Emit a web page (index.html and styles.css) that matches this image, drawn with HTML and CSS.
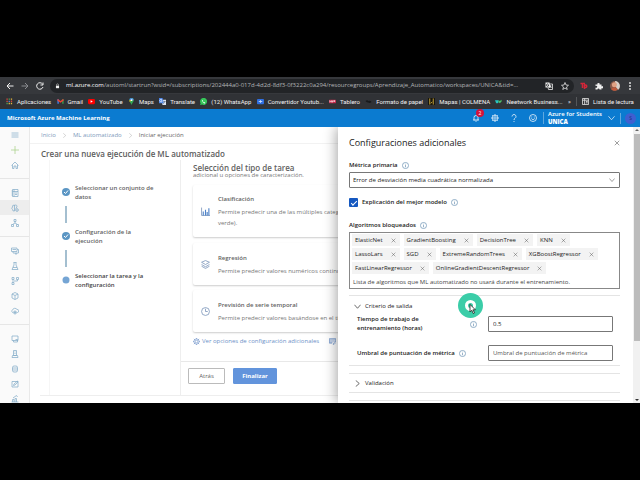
FILE: index.html
```
<!DOCTYPE html>
<html lang="es">
<head>
<meta charset="utf-8">
<title>Microsoft Azure Machine Learning</title>
<link rel="stylesheet" href="styles.css">
</head>
<body>
<svg class="defs" aria-hidden="true">
  <symbol id="info" viewBox="0 0 16 16"><circle cx="8" cy="8" r="7"/><path d="M8 7v5M8 4v1.5"/></symbol>
  <symbol id="x" viewBox="0 0 16 16"><path d="M2 2l12 12M14 2L2 14"/></symbol>
  <symbol id="down" viewBox="0 0 16 16"><path d="M1 4l7 8 7-8"/></symbol>
  <symbol id="right" viewBox="0 0 16 16"><path d="M4 1l8 7-8 7"/></symbol>
</svg>

<header class="browser">
  <div class="address-row">
    <button class="nav back" aria-label="Atrás"><svg viewBox="0 0 16 16"><path d="M15 8H2M8 2L2 8l6 6"/></svg></button>
    <button class="nav dim" aria-label="Adelante"><svg viewBox="0 0 16 16"><path d="M1 8h13M8 2l6 6-6 6"/></svg></button>
    <button class="nav reload" aria-label="Recargar"><svg viewBox="0 0 16 16"><path d="M13 4a6.500 6.500 0 1 0 1 6M14 1v5H9"/></svg></button>
    <div class="omnibox">
      <svg class="lock" viewBox="0 0 16 16"><path class="solid" d="M3 7h10v8H3z"/><path d="M5 7V4a3 3 0 0 1 6 0v3"/></svg>
      <span class="url"><b>ml.azure.com</b>/automl/startrun?wsid=/subscriptions/202444a0-017d-4d2d-8df3-0f3222c0a294/resourcegroups/Aprendizaje_Automatico/workspaces/UNICA&amp;tid=...</span>
      <svg class="tool" viewBox="0 0 16 16"><path class="solid" d="M1 1h8l2 10H1z"/><path d="M10 4h5v11H7l-1-4M9 8h4M11 7v2l-2 3M11 9l2 3"/><path class="dark" d="M7 4.500A2.500 2.500 0 1 0 7 8V6H5"/></svg>
      <svg class="tool" viewBox="0 0 16 16"><path d="M8 1l2 5 5 .5-4 3.500 1.500 5L8 12l-4.500 3L5 10 1 6.500 6 6z"/></svg>
    </div>
    <svg class="ext red" viewBox="0 0 16 16"><path d="M1 3h9M5 3v9M8 6h3a2 2 0 0 1 0 5H9M9 6v8"/></svg>
    <svg class="ext" viewBox="0 0 16 16"><path class="solid" d="M1 5h4a2.200 2.200 0 1 1 4 0h4v4a2.200 2.200 0 1 1 0 3v3H9a2 2 0 1 0-4 0H1v-4a2 2 0 1 0 0-3z"/></svg>
    <svg class="avatar" viewBox="0 0 16 16"><circle cx="8" cy="8" r="8" fill="#8b5a4a"/><path d="M8 0a8 8 0 0 1 5 14L9 9z" fill="#d8d2cc"/><circle cx="7" cy="6" r="4" fill="#e0a184"/><path d="M2 13q5-6 10 0-5 5-10 0z" fill="#c05a3c"/></svg>
    <svg class="kebab" viewBox="0 0 16 16"><g fill="#ddd"><circle cx="8" cy="2" r="2"/><circle cx="8" cy="8" r="2"/><circle cx="8" cy="14" r="2"/></g></svg>
  </div>
  <nav class="bookmarks" aria-label="Marcadores">
    <a href="#"><svg viewBox="0 0 16 16"><g fill="#e34b3d"><path d="M1 1h3v3H1zM1 6h3v3H1z"/></g><g fill="#49a35a"><path d="M6 1h3v3H6zM1 11h3v3H1z"/></g><g fill="#e8b93b"><path d="M11 1h3v3h-3zM6 11h3v3H6zM11 11h3v3h-3z"/></g><path d="M6 6h3v3H6z" fill="#4b83e8"/><path d="M11 6h3v3h-3z" fill="#e34b3d"/></svg>Aplicaciones</a>
    <a href="#"><svg viewBox="0 0 16 16"><path d="M1 3h3v10H1z" fill="#4285f4"/><path d="M12 3h3v10h-3z" fill="#34a853"/><path d="M1 3h2l5 4 5-4h2v3l-7 5-7-5z" fill="#ea4335"/></svg>Gmail</a>
    <a href="#"><svg viewBox="0 0 16 16"><rect y="2" width="16" height="12" rx="3" fill="#f00"/><path d="M6 5l5 3-5 3z" fill="#fff"/></svg>YouTube</a>
    <a href="#"><svg viewBox="0 0 16 16"><path d="M8 16C7 11 3 9 3 5a5 5 0 0 1 10 0c0 4-4 6-5 11z" fill="#34a853"/><path d="M3 5a5 5 0 0 1 5-5v5z" fill="#4285f4"/><path d="M3 5h5l-4 4z" fill="#fbbc04"/><path d="M8 0a5 5 0 0 1 5 5H8z" fill="#5a9bf5"/><circle cx="8" cy="5" r="2" fill="#fff"/></svg>Maps</a>
    <a href="#"><svg viewBox="0 0 16 16"><path d="M6 4h10v12H8z" fill="#dce3ee"/><path d="M0 0h8l3 12H0z" fill="#4a84e8"/><path d="M7 4a3 3 0 1 0 0 4V6H5" fill="none" stroke="#fff"/><path d="M10 8h5M13 7v2l-3 4" fill="none" stroke="#607080"/></svg>Translate</a>
    <a href="#"><svg viewBox="0 0 16 16"><path d="M0 16l1.500-4A8 8 0 1 1 5 15z" fill="#35c759"/><path d="M5 4q-2 2 2 6t5 1l-2-2-1 1-3-3 1-1z" fill="#fff"/></svg>(12) WhatsApp</a>
    <a href="#"><svg viewBox="0 0 16 16"><rect y="2" width="16" height="12" rx="2" fill="#2f6fe0"/><path d="M4 8h8M8 5v6" stroke="#cfe0ff" stroke-width="2"/></svg>Convertidor Youtub...</a>
    <a href="#"><svg viewBox="0 0 16 16"><rect y="4" width="16" height="8" rx="1" fill="#c5284a"/><path d="M2 10V6l2 2 2-2v4M8 6v4M10 6h4M10 8h4" stroke="#fff" fill="none"/></svg>Tablero</a>
    <a href="#"><svg viewBox="0 0 16 16"><path d="M1 7q4-4 7 0 4-2 7 2-5 4-7 1-4 1-7-3z" fill="#18191b"/></svg>Formato de papel</a>
    <a href="#"><svg viewBox="0 0 16 16"><path d="M0 0h16v16H0z" fill="#17150d"/><path d="M4 1v14M12 1v14M6 12l4-3" stroke="#d8b13c" stroke-width="2"/></svg>Mapas | COLMENA</a>
    <a href="#"><svg viewBox="0 0 16 16"><path d="M0 5h8v3a3 3 0 0 1-6 2z" fill="#27c4c0"/><path d="M8 5l3 2 4-3v4l-4 4-3-3z" fill="#4fc36b"/></svg>Neetwork Business...</a>
    <span>»</span>
    <a href="#" class="reading"><svg viewBox="0 0 16 16"><path d="M1 1h14v14H1zM1 5h14M6 1v14M9 8h4M9 11h4" fill="none" stroke="#ddd" stroke-width="2"/></svg>Lista de lectura</a>
  </nav>
</header>

<header class="azure">
  <strong class="brand">Microsoft Azure Machine Learning</strong>
  <button class="bell" aria-label="Notificaciones"><svg viewBox="0 0 16 16"><path d="M2 12h12M4 12V7a4 4 0 0 1 8 0v5M6 13q2 4 4 0"/></svg><span class="badge">2</span></button>
  <button aria-label="Configuración"><svg viewBox="0 0 16 16"><circle cx="8" cy="8" r="5.500"/><circle cx="8" cy="8" r="2.500"/><path d="M8 0v2M8 14v2M0 8h2M14 8h2M2.500 2.500L4 4M12 12l1.500 1.500M2.500 13.500L4 12M12 4l1.500-1.500"/></svg></button>
  <button aria-label="Ayuda"><svg viewBox="0 0 16 16"><path d="M4 5a4 4 0 1 1 6 3.500Q8 9.500 8 12M8 14v2"/></svg></button>
  <button aria-label="Comentarios"><svg viewBox="0 0 16 16"><circle cx="8" cy="8" r="7"/><path d="M4.500 9q3.500 5 7 0M5.500 5v2M10.500 5v2"/></svg></button>
  <button class="account"><span>Azure for Students<br><b>UNICA</b></span><svg viewBox="0 0 16 16"><use href="#down"/></svg></button>
  <button class="user" aria-label="Cuenta"><span>S</span></button>
</header>

<div class="stage">
  <nav class="rail" aria-label="Navegación">
    <a href="#" aria-label="Menú"><svg viewBox="0 0 16 16"><path d="M1 4h14M1 8h14M1 12h14"/></svg></a>
    <a href="#" class="new" aria-label="Nuevo"><svg viewBox="0 0 16 16"><path d="M8 0v16M0 8h16"/></svg></a>
    <a href="#" aria-label="Inicio"><svg viewBox="0 0 16 16"><path d="M1 9l7-7 7 7M3 8v7h3v-5h4v5h3V8"/></svg></a>
    <hr>
    <a href="#" aria-label="Notebooks"><svg viewBox="0 0 16 16"><path d="M3 1h11v14H3zM3 5h11M6 1v14M8 8h4M8 11h4M1 4h2M1 8h2M1 12h2"/></svg></a>
    <a href="#" class="current" aria-label="ML automatizado"><svg viewBox="0 0 16 16"><path d="M7 14V2Q2 2 3 6q-3 3 0 5 0 4 4 3M7 3q5-3 5 3l-3 3"/><circle cx="12" cy="12" r="2.500"/><path d="M12 8v1M12 15v1M8 12h1M15 12h1"/></svg></a>
    <a href="#" aria-label="Diseñador"><svg viewBox="0 0 16 16"><path d="M6 1h4v4H6zM1 11h4v4H1zM11 11h4v4h-4zM8 5v3M3 11l5-3 5 3"/></svg></a>
    <hr>
    <a href="#" aria-label="Conjuntos de datos"><svg viewBox="0 0 16 16"><path d="M1 2h11v7H1zM4 9v3h11V5h-3M3 5h7M8 12l2 3 2-3"/></svg></a>
    <a href="#" aria-label="Experimentos"><svg viewBox="0 0 16 16"><path d="M5 1h6M6 1v5L2 15h12L10 6V1M4 11h8"/></svg></a>
    <a href="#" aria-label="Canalizaciones"><svg viewBox="0 0 16 16"><path d="M2 1h4v4H2zM11 1h4v4h-4zM2 11h4v4H2zM4 5v6M6 8h7V5"/></svg></a>
    <a href="#" aria-label="Modelos"><svg viewBox="0 0 16 16"><path d="M8 1l6 3v8l-6 3-6-3V4zM2 4l6 3 6-3M8 7v8"/></svg></a>
    <a href="#" aria-label="Puntos de conexión"><svg viewBox="0 0 16 16"><path d="M4 11H3a3 3 0 0 1 0-5 5 5 0 0 1 9-1 3 3 0 0 1 1 6h-1"/><circle cx="8" cy="11" r="3"/><path d="M8 9v4M6 11h4"/></svg></a>
    <hr>
    <a href="#" aria-label="Proceso"><svg viewBox="0 0 16 16"><path d="M2 2h12v9H2zM5 14h8M5 11v3M9 9h4v5"/></svg></a>
    <a href="#" aria-label="Máquinas"><svg viewBox="0 0 16 16"><path d="M5 1h6v10H5zM7 4h2M7 7h2M3 11h10l1 4H2z"/></svg></a>
    <a href="#" aria-label="Almacenes de datos"><svg viewBox="0 0 16 16"><rect x="3" y="2" width="10" height="12" rx="3"/><path d="M3 6h10M3 10h10"/></svg></a>
    <a href="#" aria-label="Etiquetado"><svg viewBox="0 0 16 16"><path d="M2 3h12v11H2zM5 11l1-3 7-6 1 2-6 6z"/></svg></a>
    <a href="#" aria-label="Servicios"><svg viewBox="0 0 16 16"><path d="M1 14h14M3 14V9h3v5M8 14V7h3v7M4 6l7-5 2 3"/></svg></a>
  </nav>

  <main class="page">
    <nav class="crumbs" aria-label="Ruta">
      <a href="#">Inicio</a><svg viewBox="0 0 16 16"><use href="#right"/></svg>
      <a href="#">ML automatizado</a><svg viewBox="0 0 16 16"><use href="#right"/></svg>
      <span>Iniciar ejecución</span>
    </nav>
    <h1>Crear una nueva ejecución de ML automatizado</h1>
    <div class="wizard">
      <ol class="steps">
        <li><svg class="dot" viewBox="0 0 16 16"><circle cx="8" cy="8" r="8"/><path d="M4 8l3 3 5-6"/></svg><span>Seleccionar un conjunto de datos</span></li>
        <li><svg class="dot" viewBox="0 0 16 16"><circle cx="8" cy="8" r="8"/><path d="M4 8l3 3 5-6"/></svg><span>Configuración de la ejecución</span></li>
        <li class="active"><svg class="dot" viewBox="0 0 16 16"><circle cx="8" cy="8" r="7"/></svg><span>Seleccionar la tarea y la configuración</span></li>
      </ol>
      <section class="task">
        <div class="task-body">
          <h2>Selección del tipo de tarea</h2>
          <p class="hint">adicional u opciones de caracterización.</p>
          <article class="card tall">
            <svg viewBox="0 0 16 16"><path d="M1 1v14h15"/><path class="bars" d="M4 15V8M8 15V5M11 15V9M14 15V2"/></svg>
            <div><h3>Clasificación</h3><p>Permite predecir una de las múltiples categorías,<br>verde).</p></div>
          </article>
          <article class="card">
            <svg viewBox="0 0 16 16"><path d="M8 1l7 3-7 4-7-4zM1 8l7 4 7-4M1 11l7 4 7-4"/></svg>
            <div><h3>Regresión</h3><p>Permite predecir valores numéricos continuos.</p></div>
          </article>
          <article class="card">
            <svg viewBox="0 0 16 16"><circle cx="8" cy="8" r="7"/><path d="M8 3v5h4"/></svg>
            <div><h3>Previsión de serie temporal</h3><p>Permite predecir valores basándose en el tiempo.</p></div>
          </article>
          <div class="links">
            <a href="#"><svg viewBox="0 0 16 16"><circle cx="8" cy="8" r="6"/><circle cx="8" cy="8" r="3"/><path d="M8 0v2M8 14v2M0 8h2M14 8h2M2 2l2 2M12 12l2 2M2 14l2-2M12 4l2-2"/></svg>Ver opciones de configuración adicionales</a>
            <a href="#" aria-label="Ver configuración de caracterización"><svg viewBox="0 0 16 16"><path d="M1 1h14v8M1 1v11h6M1 4h14M1 7h12M1 10h7M9 14l5-6 2 2-5 5z"/></svg></a>
          </div>
        </div>
        <div class="actions"><button>Atrás</button><button class="primary">Finalizar</button></div>
      </section>
    </div>
    <div class="foot"></div>
  </main>

  <aside class="drawer">
    <form class="panel">
      <div class="panel-head"><h2>Configuraciones adicionales</h2><button type="button" aria-label="Cerrar"><svg viewBox="0 0 16 16"><use href="#x"/></svg></button></div>
      <div class="label"><label for="metric">Métrica primaria</label><svg class="info" viewBox="0 0 16 16"><use href="#info"/></svg></div>
      <div class="select"><select id="metric"><option>Error de desviación media cuadrática normalizada</option></select><svg viewBox="0 0 16 16"><use href="#down"/></svg></div>
      <div class="check"><input type="checkbox" id="explain" checked><label for="explain">Explicación del mejor modelo</label><svg class="info" viewBox="0 0 16 16"><use href="#info"/></svg></div>
      <div class="label"><span>Algoritmos bloqueados</span><svg class="info" viewBox="0 0 16 16"><use href="#info"/></svg></div>
      <div class="tags">
        <ul>
          <li>ElasticNet<button type="button" aria-label="Quitar ElasticNet"><svg viewBox="0 0 16 16"><use href="#x"/></svg></button></li>
          <li>GradientBoosting<button type="button" aria-label="Quitar GradientBoosting"><svg viewBox="0 0 16 16"><use href="#x"/></svg></button></li>
          <li>DecisionTree<button type="button" aria-label="Quitar DecisionTree"><svg viewBox="0 0 16 16"><use href="#x"/></svg></button></li>
          <li>KNN<button type="button" aria-label="Quitar KNN"><svg viewBox="0 0 16 16"><use href="#x"/></svg></button></li>
        </ul>
        <ul>
          <li>LassoLars<button type="button" aria-label="Quitar LassoLars"><svg viewBox="0 0 16 16"><use href="#x"/></svg></button></li>
          <li>SGD<button type="button" aria-label="Quitar SGD"><svg viewBox="0 0 16 16"><use href="#x"/></svg></button></li>
          <li>ExtremeRandomTrees<button type="button" aria-label="Quitar ExtremeRandomTrees"><svg viewBox="0 0 16 16"><use href="#x"/></svg></button></li>
          <li>XGBoostRegressor<button type="button" aria-label="Quitar XGBoostRegressor"><svg viewBox="0 0 16 16"><use href="#x"/></svg></button></li>
        </ul>
        <ul>
          <li>FastLinearRegressor<button type="button" aria-label="Quitar FastLinearRegressor"><svg viewBox="0 0 16 16"><use href="#x"/></svg></button></li>
          <li>OnlineGradientDescentRegressor<button type="button" aria-label="Quitar OnlineGradientDescentRegressor"><svg viewBox="0 0 16 16"><use href="#x"/></svg></button></li>
        </ul>
        <p>Lista de algoritmos que ML automatizado no usará durante el entrenamiento.</p>
      </div>
      <section class="group">
        <button type="button" class="toggle" aria-expanded="true"><svg viewBox="0 0 16 16"><use href="#down"/></svg>Criterio de salida</button>
        <div class="field"><label for="hours">Tiempo de trabajo de entrenamiento (horas)</label><svg class="info" viewBox="0 0 16 16"><use href="#info"/></svg><input id="hours" type="text" value="0.5"></div>
        <div class="field second"><label for="score">Umbral de puntuación de métrica</label><svg class="info" viewBox="0 0 16 16"><use href="#info"/></svg><input id="score" type="text" placeholder="Umbral de puntuación de métrica"></div>
      </section>
      <section class="group closed"><button type="button" class="toggle" aria-expanded="false"><svg viewBox="0 0 16 16"><use href="#right"/></svg>Validación</button></section>
      <section class="group"></section>
    </form>
    <div class="scroll" aria-hidden="true"><i class="up"></i><div class="thumb"></div><i class="dn"></i></div>
    <div class="pointer" aria-hidden="true"><svg viewBox="0 0 16 24"><path d="M2 1v18l4-4 4 8 3-2-4-7h6z"/></svg></div>
  </aside>
</div>
</body>
</html>
```

FILE: styles.css
```
* { box-sizing: border-box; }
body {
  margin: 0;
  padding: 77px 0;
  height: 100vh;
  display: flex;
  flex-direction: column;
  background: #000;
  color: #222;
  font: 6px/9px "Open Sans", "Noto Sans", sans-serif;
}
h1, h2, h3, p, ul, ol { margin: 0; padding: 0; font-weight: 400; }
ul, ol { list-style: none; }
a { color: inherit; text-decoration: none; }
button { margin: 0; padding: 0; border: 0; background: none; font: inherit; color: inherit; display: flex; align-items: center; }
svg { width: 8px; height: 8px; flex: none; fill: none; stroke: currentColor; stroke-width: 1.500; }
.defs { position: absolute; width: 0; height: 0; }

/* Browser chrome */
.browser { flex: none; background: #303236; color: #f0f0f0; }
.address-row { height: 17px; display: flex; align-items: center; padding-right: 6px; background: #36383c; }
.nav { width: 10px; justify-content: center; }
.nav svg { stroke-width: 2; }
.nav.back { width: 20px; }
.nav.reload { width: 20px; }
.dim { color: #8a8c90; }
.omnibox { flex: 1; min-width: 0; height: 14px; margin-right: 6px; padding: 0 5px; display: flex; align-items: center; gap: 8px; border-radius: 7px; background: #222427; }
.lock { width: 5px; height: 6px; margin-right: -2px; }
.solid { fill: currentColor; stroke: none; }
.dark { stroke: #222427; }
.url { flex: 1; white-space: nowrap; color: #b4b6b9; }
.url b { font-weight: 400; color: #fff; }
.ext { margin-right: 7px; }
.red { color: #d32638; stroke-width: 3; }
.avatar { width: 10px; height: 10px; stroke: none; margin-right: 6px; }
.kebab { stroke: none; }
.bookmarks { height: 15px; padding: 0 6px; display: flex; align-items: center; justify-content: space-between; font-family: Roboto, "Open Sans", sans-serif; white-space: nowrap; }
.bookmarks a { display: flex; align-items: center; gap: 4px; }
.bookmarks svg { width: 7px; height: 7px; stroke: none; }
.bookmarks .reading { padding-left: 5px; border-left: 1px solid #55575a; }

/* Product bar */
.azure { flex: none; height: 18px; padding: 0 4px 0 7px; display: flex; align-items: center; gap: 11px; background: #0b7bd0; color: #fff; }
.brand { margin-right: auto; font-weight: 700; }
.bell { position: relative; }
.badge { position: absolute; left: 4px; top: -5px; width: 8px; height: 8px; border-radius: 50%; background: #d3133b; font-size: 5px; line-height: 8px; text-align: center; }
.account { height: 12px; padding-left: 4px; margin-left: -5px; border-left: 1px solid #5fa8df; gap: 6px; text-align: left; line-height: 8px; font-weight: 600; white-space: nowrap; }
.account svg { width: 7px; }
.user { margin-left: -6px; padding-left: 4px; border-left: 1px solid #5fa8df; }
.user span { width: 11px; border-radius: 50%; background: #3f5fd0; line-height: 11px; text-align: center; font-size: 5px; color: #1e2c80; }

/* Working area */
.stage { flex: 1; min-height: 0; position: relative; display: flex; overflow: hidden; background: #fff; }
.rail { width: 30px; flex: none; border-right: 1px solid #e9e9e9; background: #fafafa; color: #86aeca; }
.rail a { height: 15px; display: flex; align-items: center; justify-content: center; }
.rail .current { background: #ededed; }
.rail .new { color: #a9d08a; }
.rail hr { height: 1px; margin: 6px 0; border: 0; background: #e6e6e6; }
.page { flex: 1; min-width: 0; display: flex; flex-direction: column; color: #626262; }
.crumbs { height: 17px; flex: none; padding-left: 11px; display: flex; align-items: center; gap: 6px; border-bottom: 1px solid #f2f2f2; color: #666; }
.crumbs a { color: #7e9abb; }
.crumbs svg { width: 5px; height: 5px; color: #aaa; }
.page h1 { margin: 4px 0 0 11px; flex: none; font-size: 8px; line-height: 12px; font-weight: 600; color: #5c5c5c; }
.wizard { flex: 1; min-height: 0; margin: 0 0 0 19px; display: flex; }
.steps { width: 132px; flex: none; padding: 24px 22px 0 12px; border-left: 1px solid #f6f6f6; border-right: 1px solid #eee; font-weight: 600; }
.steps li { position: relative; height: 44px; display: flex; gap: 5px; }
.steps li:not(:last-child)::after { content: ""; position: absolute; left: 3px; top: 22px; width: 2px; height: 17px; background: #a4bfd0; }
.dot { margin-top: 4px; fill: #5b96c4; stroke: none; }
.dot path { fill: none; stroke: #fff; stroke-width: 2; }
.active { color: #444; }
.active .dot { fill: #75a5d4; }
.task { flex: 1; display: flex; flex-direction: column; }
.task-body { padding: 3px 16px 0 12px; }
.task h2 { font-size: 8px; line-height: 9px; font-weight: 600; }
.hint { line-height: 7px; color: #777; }
.card { height: 42px; margin-bottom: 5px; padding: 0 8px; display: flex; align-items: center; gap: 8px; border-radius: 2px; box-shadow: 0 1px 2px #ccc; background: #fff; }
.card.tall { height: 52px; margin: 6px 0; }
.card svg { width: 9px; height: 9px; color: #8099bd; }
.card .bars { stroke-width: 2; stroke: #4f83c8; }
.card h3 { font-size: 6px; line-height: 12px; margin-bottom: 2px; font-weight: 600; }
.card p { line-height: 11px; white-space: nowrap; color: #777; }
.links { display: flex; gap: 10px; color: #6d91c8; }
.links a { display: flex; align-items: center; gap: 2px; }
.links svg { width: 7px; height: 7px; }
.actions { margin-top: 15px; padding: 6px 7px; display: flex; gap: 8px; border-top: 1px solid #e8e8e8; }
.actions button { min-width: 37px; height: 16px; justify-content: center; border: 1px solid #bbb; border-radius: 1px; }
.actions .primary { min-width: 44px; border-color: #6294dc; background: #6294dc; color: #fff; font-weight: 700; }
.foot { height: 8px; flex: none; margin-left: 10px; border-top: 1px solid #eee; }

/* Settings drawer */
.drawer { position: absolute; inset: 0 0 0 auto; width: 302px; display: flex; background: #fff; box-shadow: -2px 0 12px #0005; }
.panel { flex: 1; min-width: 0; padding: 9px 13px 0 11px; overflow: hidden; }
.panel-head { display: flex; align-items: center; justify-content: space-between; height: 13px; margin-bottom: 11px; }
.panel-head h2 { font-size: 9px; line-height: 13px; }
.panel-head svg { width: 6px; height: 6px; color: #555; }
.label, .check { display: flex; align-items: center; gap: 4px; font-weight: 600; }
.label { height: 10px; margin-bottom: 2px; }
.info { width: 7px; height: 7px; color: #5f88ad; }
.select { display: flex; position: relative; }
.select svg { position: absolute; right: 5px; top: 5px; width: 6px; height: 6px; color: #555; pointer-events: none; }
select { flex: 1; height: 16px; padding: 0 3px; appearance: none; border: 1px solid #777; border-radius: 1px; background: #fff; color: #222; font: inherit; }
.check { height: 10px; margin: 9px 0 13px; }
.check input { width: 9px; height: 9px; margin: 0; appearance: none; border-radius: 1px; background: #1558c0; display: grid; place-items: center; }
.check input::after { content: ""; width: 5px; height: 2px; border: solid #fff; border-width: 0 0 1px 1px; transform: rotate(-45deg); }
.tags { border: 1px solid #888; padding: 1px 2px; height: 57px; }
.tags ul { display: flex; gap: 4px; margin-bottom: 2px; }
.tags li { height: 12px; padding: 0 3px; display: flex; align-items: center; gap: 7px; background: #f3f3f3; }
.tags li svg { width: 5px; height: 5px; color: #555; }
.tags li button { width: 7px; justify-content: center; }
.tags p { padding: 1px; line-height: 11px; color: #444; white-space: nowrap; }
.group { margin-top: 7px; padding: 5px 7px 4px 5px; border: solid #e4e4e4; border-width: 1px 0; }
.tags + .group { margin-top: 6px; }
.toggle { height: 10px; gap: 4px; }
.toggle svg { width: 7px; height: 7px; }
.field { display: flex; align-items: center; gap: 4px; padding-left: 3px; margin-top: 4px; font-weight: 600; }
.field label { width: 109px; padding-right: 22px; }
.field input { width: 125px; height: 16px; margin-left: auto; padding: 0 4px; border: 1px solid #777; border-radius: 1px; font: inherit; font-weight: 400; color: #222; }
.field.second { margin-top: 12px; }
.field.second label { width: auto; padding: 0; }
.field input::placeholder { color: #555; opacity: 1; }
.closed { padding: 4px 5px; }
.scroll { width: 7px; flex: none; display: flex; flex-direction: column; align-items: center; background: #f1f1f1; }
.scroll i { border: 2px solid transparent; }
.scroll .up { border-bottom-color: #666; margin: 0 0 3px; }
.scroll .dn { border-top-color: #333; margin-top: auto; }
.thumb { width: 6px; height: 75%; max-height: 218px; background: #bcbcbc; }
.pointer { position: absolute; left: 120px; top: 166px; width: 25px; height: 25px; border: 7px solid #3bcda8; border-radius: 50%; background: #fff; }
.pointer::before { content: ""; position: absolute; left: 3px; top: 3px; width: 5px; height: 5px; border-radius: 50%; background: #3bcda8; }
.pointer svg { position: absolute; left: 4px; top: 4px; width: 7px; height: 10px; fill: #fff; stroke: #222; stroke-width: 2; }
```
